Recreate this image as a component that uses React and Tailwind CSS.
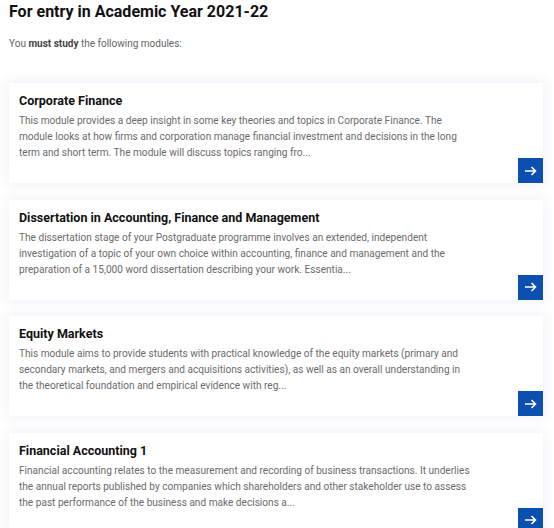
import React from "react";

const modules = [
  {
    title: "Corporate Finance",
    lines: [
      "This module provides a deep insight in some key theories and topics in Corporate Finance. The",
      "module looks at how firms and corporation manage financial investment and decisions in the long",
      "term and short term. The module will discuss topics ranging fro...",
    ],
  },
  {
    title: "Dissertation in Accounting, Finance and Management",
    lines: [
      "The dissertation stage of your Postgraduate programme involves an extended, independent",
      "investigation of a topic of your own choice within accounting, finance and management and the",
      "preparation of a 15,000 word dissertation describing your work. Essentia...",
    ],
  },
  {
    title: "Equity Markets",
    lines: [
      "This module aims to provide students with practical knowledge of the equity markets (primary and",
      "secondary markets, and mergers and acquisitions activities), as well as an overall understanding in",
      "the theoretical foundation and empirical evidence with reg...",
    ],
  },
  {
    title: "Financial Accounting 1",
    lines: [
      "Financial accounting relates to the measurement and recording of business transactions. It underlies",
      "the annual reports published by companies which shareholders and other stakeholder use to assess",
      "the past performance of the business and make decisions a...",
    ],
  },
];

const ModuleCard = ({ title, lines }) => (
  <div className="relative bg-white h-[100px] shadow-[0_0_10px_2px_rgba(30,70,160,0.07)]">
    <div className="pl-[10px] pt-[10px] pr-[60px]">
      <h3 className="text-[12.5px] leading-[16px] font-bold text-[#111]">{title}</h3>
      <p className="mt-[4px] text-[10.1px] leading-[16px] text-[#6b6b6b] whitespace-nowrap">
        {lines.map((l, i) => (
          <span key={i} className="block">{l}</span>
        ))}
      </p>
    </div>
    <button className="absolute right-0 bottom-0 w-[25px] h-[25px] bg-[#0b4fb0] flex items-center justify-center">
      <svg width="12" height="10" viewBox="0 0 12 10" fill="none" stroke="white" strokeWidth="1.6">
        <path d="M0 5h10.5M6.5 1l4 4-4 4" />
      </svg>
    </button>
  </div>
);

export default function App() {
  return (
    <div className="bg-white min-h-screen px-[9px] pt-[2px] font-['Roboto',sans-serif]">
      <h1 className="text-[16px] leading-[20px] font-bold text-[#111]">For entry in Academic Year 2021-22</h1>
      <p className="mt-[15px] text-[10px] leading-[14px] text-[#666]">
        You <strong className="font-bold text-[#444]">must study</strong> the following modules:
      </p>
      <div className="mt-[32px] mr-[2px] flex flex-col gap-[16.5px]">
        {modules.map((m) => (
          <ModuleCard key={m.title} {...m} />
        ))}
      </div>
    </div>
  );
}
